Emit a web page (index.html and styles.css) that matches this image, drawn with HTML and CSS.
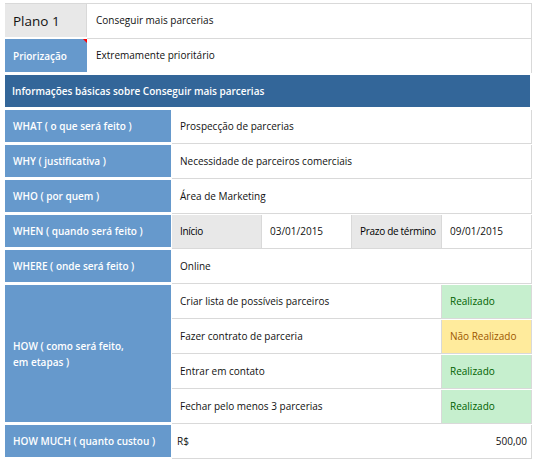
FILE: index.html
```html
<!DOCTYPE html>
<html lang="pt-BR">
<head>
    <meta charset="UTF-8">
    <title>Plano 1 - 5W2H</title>
    <link rel="stylesheet" href="styles.css">
</head>
<body>
    <div class="sheet">
        <div class="plan-row first">
            <div class="plan-name">Plano 1</div>
            <div class="plan-value">Conseguir mais parcerias</div>
        </div>
        <div class="plan-row">
            <div class="prio-label">Priorização</div>
            <div class="plan-value">Extremamente prioritário</div>
        </div>

        <div class="section-head">Informações básicas sobre Conseguir mais parcerias</div>

        <div class="grid">
            <div class="label">WHAT ( o que será feito )</div>
            <div class="cell span4">Prospecção de parcerias</div>

            <div class="label">WHY ( justificativa )</div>
            <div class="cell span4">Necessidade de parceiros comerciais</div>

            <div class="label">WHO ( por quem )</div>
            <div class="cell span4">Área de Marketing</div>

            <div class="label">WHEN ( quando será feito )</div>
            <div class="cell grey thin">Início</div>
            <div class="cell">03/01/2015</div>
            <div class="cell grey thin">Prazo de término</div>
            <div class="cell">09/01/2015</div>

            <div class="label">WHERE ( onde será feito )</div>
            <div class="cell span4">Online</div>

            <div class="label how">HOW ( como será feito,<br>em etapas )</div>
            <div class="cell span3">Criar lista de possíveis parceiros</div>
            <div class="cell done">Realizado</div>
            <div class="cell span3">Fazer contrato de parceria</div>
            <div class="cell pending">Não Realizado</div>
            <div class="cell span3">Entrar em contato</div>
            <div class="cell done">Realizado</div>
            <div class="cell span3">Fechar pelo menos 3 parcerias</div>
            <div class="cell done">Realizado</div>

            <div class="label">HOW MUCH ( quanto custou )</div>
            <div class="cell span4 money">
                <span>R$</span>
                <span>500,00</span>
            </div>
        </div>
    </div>
</body>
</html>
```

FILE: styles.css
```css
body {
    margin: 0;
    background: #ffffff;
    font-family: "Open Sans", "Liberation Sans", sans-serif;
    font-size: 10px;
    color: #111111;
}
.sheet {
    margin: 3px 0 0 5px;
    width: 527px;
}
.plan-row {
    display: flex;
    height: 36px;
}
.plan-row.first {
    height: 35px;
    border-top: 1px solid #d9d9d9;
}
.plan-name {
    width: 82px;
    height: 33px;
    background-color: #e8e8e8;
    border-right: 1px solid #d9d9d9;
    padding-left: 8px;
    box-sizing: border-box;
    display: flex;
    align-items: center;
    font-size: 13.5px;
}
.prio-label {
    position: relative;
    width: 82px;
    height: 33px;
    background-color: #6699cc;
    color: #ffffff;
    font-weight: 600;
    padding-left: 8px;
    box-sizing: border-box;
    display: flex;
    align-items: center;
}
.prio-label::after {
    content: "";
    position: absolute;
    top: 0;
    right: 0;
    border-top: 4px solid #ff0000;
    border-left: 4px solid transparent;
}
.plan-value {
    flex: 1;
    height: 35px;
    padding: 0 0 2px 9px;
    box-sizing: border-box;
    display: flex;
    align-items: center;
    border-right: 1px solid #d9d9d9;
    border-bottom: 1px solid #d9d9d9;
}
.plan-row + .plan-row .plan-value {
    border-bottom: none;
    height: 34px;
}
.section-head {
    height: 32px;
    width: 525px;
    margin-bottom: 3px;
    background-color: #336699;
    color: #ffffff;
    font-weight: 600;
    padding-left: 7px;
    box-sizing: border-box;
    display: flex;
    align-items: center;
}
.grid {
    display: grid;
    grid-template-columns: 167px 90px 90px 90px 90px;
    grid-auto-rows: 35px;
}
.label {
    height: 32px;
    margin-right: 1px;
    background-color: #6699cc;
    color: #ffffff;
    font-weight: 600;
    padding-left: 8px;
    box-sizing: border-box;
    display: flex;
    align-items: center;
}
.label.how {
    grid-row: span 4;
    height: 137px;
    line-height: 16px;
}
.cell {
    height: 34px;
    padding: 0 0 1px 8px;
    box-sizing: border-box;
    display: flex;
    align-items: center;
    border-bottom: 1px solid #d9d9d9;
    border-right: 1px solid #d9d9d9;
    white-space: nowrap;
}
.span4 {
    grid-column: span 4;
}
.span3 {
    grid-column: span 3;
}
.grey {
    background-color: #e8e8e8;
}
.thin {
    color: #000000;
    letter-spacing: -0.3px;
}
.done {
    background-color: #c6efce;
    color: #006100;
}
.pending {
    background-color: #ffeb9c;
    color: #9c5700;
}
.money {
    justify-content: space-between;
    padding: 0 4px 1px 5px;
}
```
